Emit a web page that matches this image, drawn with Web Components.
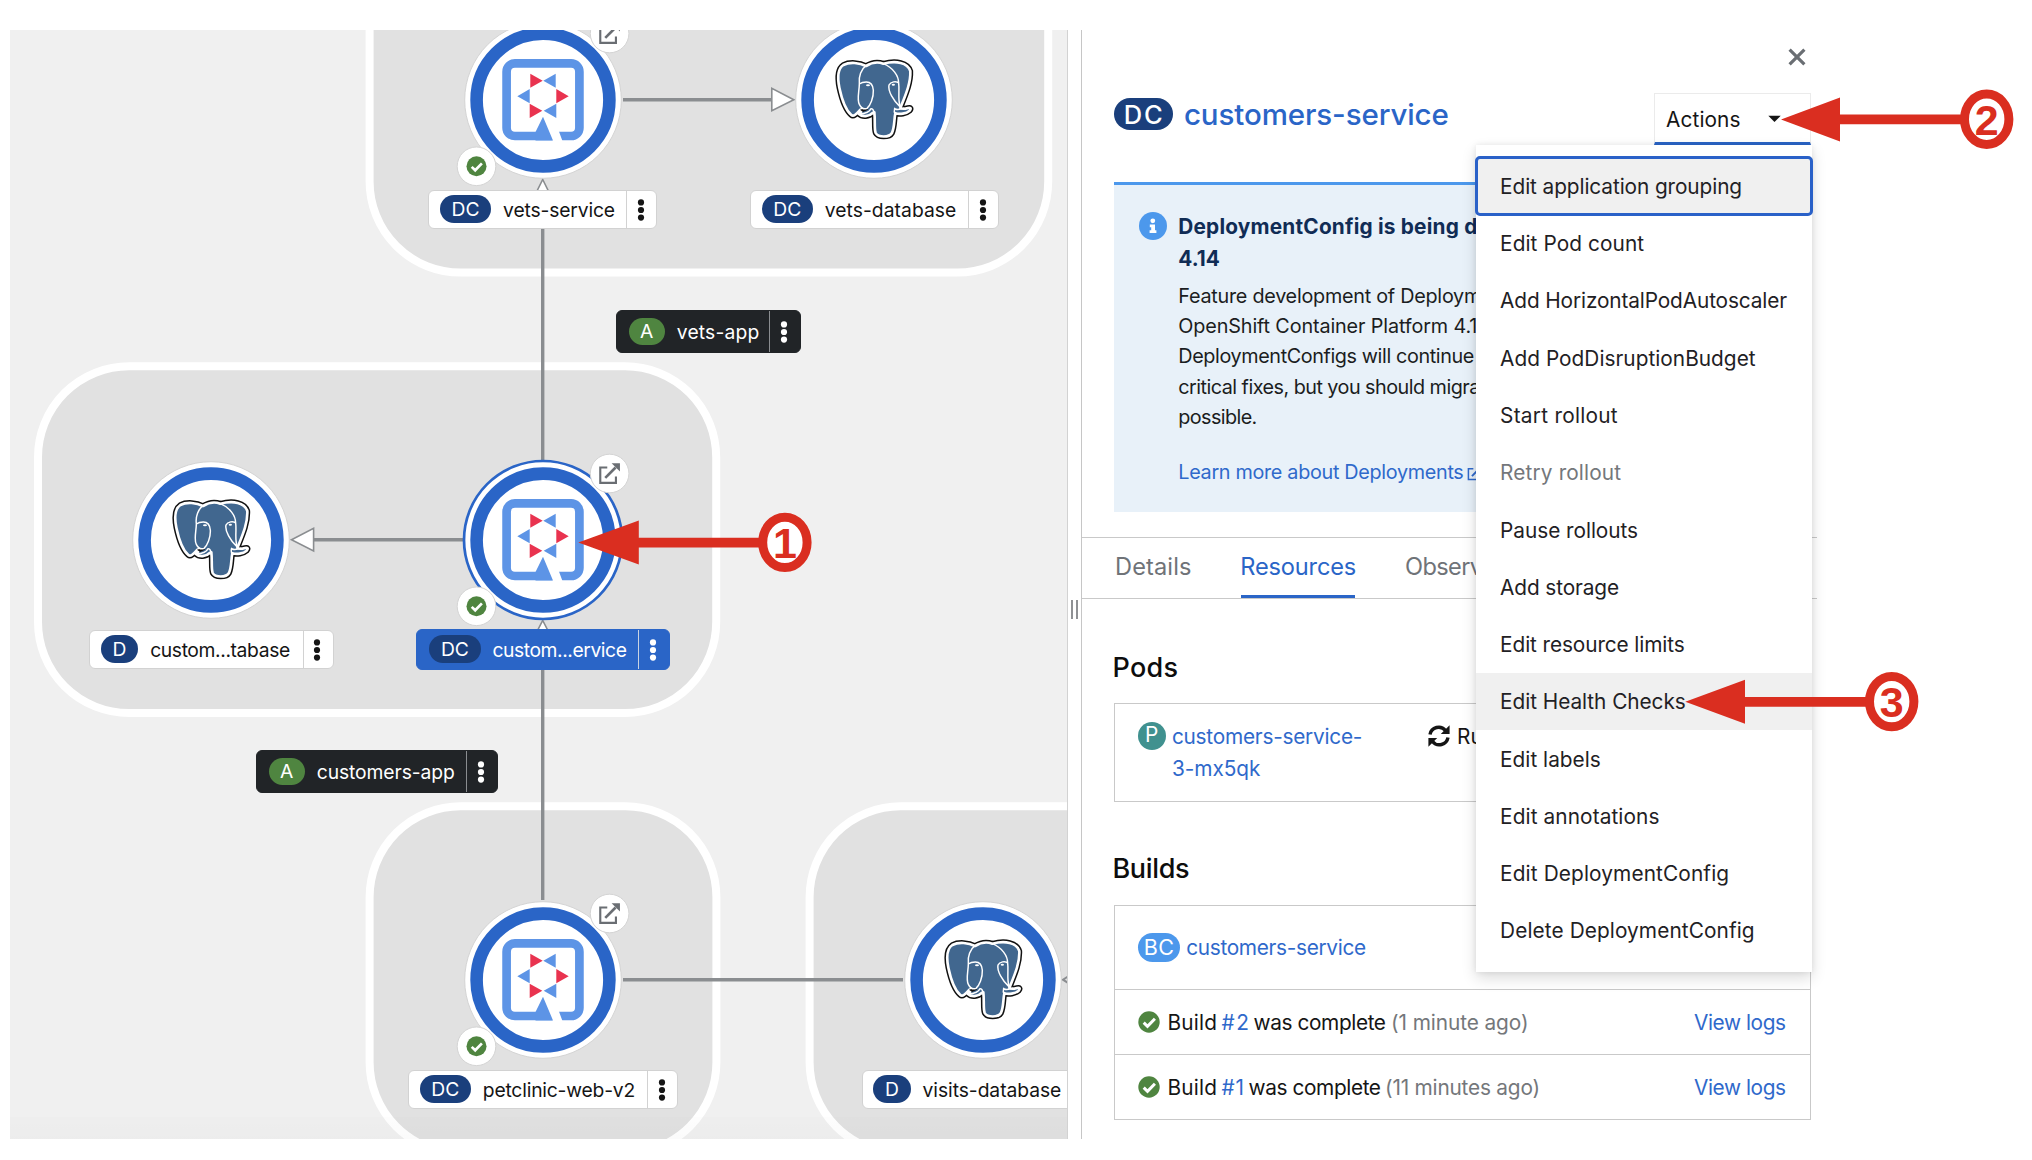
<!DOCTYPE html>
<html lang="en">
<head>
<meta charset="utf-8">
<title>customers-service topology</title>
<style>
html,body{margin:0;background:#fff}
body{width:2032px;height:1160px;overflow:hidden;font-family:Inter,"Liberation Sans",sans-serif;font-size:20.8px;color:#1b1d21}
</style>
</head>
<body>
<topology-app></topology-app>
<script>
const define=(name,html,setup)=>customElements.define(name,class extends HTMLElement{
  constructor(){super();this.attachShadow({mode:'open'});}
  connectedCallback(){
    if(this.ready)return;this.ready=true;
    this.shadowRoot.innerHTML=typeof html==='function'?html(this):html;
    if(setup)setup(this);
  }
});

define('topology-app',`<style>
:host{display:block;position:relative;width:2032px;height:1160px;overflow:hidden}
.cols{display:flex;padding:30px 0 0 10px;height:1109px}
</style>
<div class="cols"><topology-canvas></topology-canvas><split-handle></split-handle><side-panel></side-panel></div>
<callout-arrows></callout-arrows>`);

define('split-handle',`<style>
:host{display:flex;align-items:center;justify-content:center;gap:3px;box-sizing:border-box;width:14px;border-left:1.5px solid #d2d2d2;padding:48px .5px 0 0;background:#fff}
i{width:2px;height:19px;background:#8f9194;margin-top:2px}
</style><i></i><i></i>`);

define('topology-canvas',`<style>
:host{display:block;position:relative;width:1057px;height:1109px;overflow:hidden;background:#f0f0f0}
.graph{position:absolute;left:0;top:0;width:1057px;height:1109px}
.shade{position:absolute;left:0;right:0;bottom:0;height:22px;background:linear-gradient(rgba(0,0,0,.006),rgba(0,0,0,.016))}
</style>
<svg class="graph" viewBox="10 30 1057 1109">
<g fill="#e1e1e1" stroke="#fff" stroke-width="8">
<rect x="369.6" y="-80" width="678.6" height="352.6" rx="91"/>
<rect x="38" y="366.3" width="678.2" height="346.7" rx="91"/>
<rect x="369.6" y="806.3" width="346.8" height="347" rx="91"/>
<rect x="809.6" y="806.3" width="500" height="347" rx="91"/>
</g>
<g stroke="#8a8d90" stroke-width="3.4" fill="none">
<path d="M623 99.7H772M314 539.7H463M623 979.7H903M542.7 460V190M542.7 900V640"/>
<g fill="#fff" stroke-width="1.6">
<path d="M771.8 88.3V110.8L793.8 99.7ZM313.6 528.4V551L291.5 539.7ZM531.6 202H553.8L542.7 179.5ZM531.6 642H553.8L542.7 620.5Z"/>
</g>
<path d="M1069 975.9L1063 979.7L1069 983.5" stroke-width="2"/>
</g>
</svg>
<topo-node icon="quarkus" x="542.7" y="99.5" deco></topo-node>
<topo-node icon="postgres" x="874.3" y="99.5"></topo-node>
<topo-node icon="postgres" x="211.3" y="539.5"></topo-node>
<topo-node icon="quarkus" x="542.7" y="539.5" deco selected></topo-node>
<topo-node icon="quarkus" x="542.7" y="979.5" deco></topo-node>
<topo-node icon="postgres" x="982.7" y="979.5"></topo-node>
<node-label x="428.3" y="190" width="228.8" kind="DC" tw="110">vets-service</node-label>
<node-label x="750" y="190" width="249" kind="DC" tw="129.5">vets-database</node-label>
<node-label x="89.2" y="630" width="244.6" kind="D" tw="138">custom...tabase</node-label>
<node-label class="sel" x="415.8" y="629" width="254.2" kind="DC" tw="132.6">custom...ervice</node-label>
<node-label x="408" y="1070" width="270" kind="DC" tw="150.5">petclinic-web-v2</node-label>
<node-label x="861.6" y="1070" width="250" kind="D" tw="136.7">visits-database</node-label>
<node-label class="app" x="616.2" y="310.4" width="185.2" kind="A" tw="80.5">vets-app</node-label>
<node-label class="app" x="256.2" y="750.4" width="241.4" kind="A" tw="136">customers-app</node-label>
<div class="shade"></div>`);

const quarkus=`<g fill="#5d94e6"><rect x="-36.4" y="-36.6" width="72.8" height="72.6" rx="8.3" fill="none" stroke="#5d94e6" stroke-width="8.7"/>
<path fill="#fff" d="M2 23L10 43H20.2L15.8 31L7 29Z"/>
<path d="M0 16.7L-7.5 32V40.4H10ZM12.7-26.3L.3-19.3L12.7-12.3ZM-25.7-3.7L-13.3-11V3.3ZM13.3 3.7L.7 10.7L13.3 18Z"/>
<path fill="#e9334f" d="M-12.7-26.3L-.3-19.3L-12.7-12.3ZM25.7-3.7L13.3-11V3.3ZM-13.3 3.7L-.7 10.7L-13.3 18Z"/></g>`;
const elephantBody='M499 137C480 127 450 124 431 134C413 146 413 172 419 202C427 240 441 272 455 284C462 291 472 279 482 268L488 266C488 274 482 276 478 281C488 291 508 289 519 278L524 276C527 300 523 325 528 338C535 352 569 352 577 338C585 320 583 300 587 279C600 283 620 280 630 271C636 264 632 261 625 263C615 266 608 267 602 263C615 230 634 190 632 152C624 127 590 120 551 130C535 124 515 127 499 137Z';
const postgres=`<g transform="scale(.3333) translate(-523 -239)" stroke-linejoin="round" stroke-linecap="round">
<path d="${elephantBody}" fill="#111" stroke="#111" stroke-width="17"/>
<path d="${elephantBody}" fill="#41678f" stroke="#fff" stroke-width="8"/>
<path d="M481 268L500 262L505 268L490 275Z" fill="#111"/>
<g fill="none" stroke="#fff" stroke-width="4.4">
<path d="M499 136C485 146 476 168 479 190C479 212 471 238 479 252C484 262 493 268 502 264C512 255 522 232 521 210C520 194 514 185 500 185C490 185 483 188 479 191"/>
<path d="M551 130C580 142 597 166 597 188C600 212 594 236 601 256M597 188C590 181 573 184 568 194C564 212 582 242 600 258M585 264C583 270 585 280 587 284M587 266C595 270 605 265 612 264M478 281C496 280 510 276 513 266C517 264 521 267 523 276"/>
</g><ellipse cx="505" cy="195" rx="6" ry="3" fill="#fff"/><ellipse cx="581" cy="193" rx="5" ry="3" fill="#fff"/></g>`;
const linkGlyph=`<path d="M-7-18H-28V28H19V9" fill="none" stroke-width="6.4" stroke="currentColor"/><path d="M-13 13L18-18" stroke-width="8" stroke="currentColor"/><path d="M31-31H6L31-6Z" fill="currentColor"/>`;

define('topo-node',el=>`<style>
:host{display:block;position:absolute;width:180px;height:180px;left:${el.getAttribute('x')-100}px;top:${el.getAttribute('y')-120}px}
svg{display:block;overflow:visible}
</style>
<svg width="180" height="180" viewBox="-90 -90 180 180">
<circle r="78.3" fill="#fff" stroke="#d4d4d4" stroke-width="1"/>
${el.hasAttribute('selected')?'<circle r="79" fill="#fff" stroke="#2a65c7" stroke-width="2.7"/>':''}
<circle r="66.4" fill="#fff" stroke="#2a65c7" stroke-width="12.6"/>
${el.getAttribute('icon')==='quarkus'?quarkus:postgres}
${el.hasAttribute('deco')?`<g transform="translate(66.6 -66.5)" color="#6a6e73"><circle r="19.3" fill="#fff" stroke="#d4d4d4"/><g transform="scale(.3333)">${linkGlyph}</g></g>
<g transform="translate(-66.5 66.3)"><circle r="19.3" fill="#fff" stroke="#d4d4d4"/><circle r="10" fill="#4f8540"/><path d="M-4.8.6L-1.3 4L5.4-2.9" fill="none" stroke="#fff" stroke-width="2.7"/></g>`:''}
</svg>`);

define('node-label',el=>`<style>
:host{position:absolute;left:${el.getAttribute('x')-10}px;top:${el.getAttribute('y')-30}px;width:${el.getAttribute('width')}px;height:39px;box-sizing:border-box;display:flex;align-items:center;background:#fff;border:1px solid #d2d2d2;border-radius:6px;color:#151515;font-size:19.3px;padding-left:10.6px;--sep:#d2d2d2}
:host(.sel){height:41px;background:#2a65c7;border-color:#2a65c7;color:#fff;padding-left:12.4px;--sep:#c9d3e2}
:host(.app){height:43px;background:#212427;border-color:#212427;color:#fff;padding-left:11.4px;--sep:#8a8d90}
.b{display:flex;align-items:center;justify-content:center;width:${{DC:51.4,D:37.6,A:36.4}[el.getAttribute('kind')]}px;height:27.4px;margin-top:-1px;border-radius:14px;background:#1a3f7c;color:#fff;flex:none}
:host(.app) .b{background:#4f8540}
.t{margin-left:12.8px;flex:none;margin-top:1px}
.k{margin-left:auto;align-self:stretch;border-left:1px solid var(--sep);box-sizing:border-box;padding-right:2px;width:${el.className?31:30}px;display:flex;align-items:center;justify-content:center;flex:none}
</style><span class="b">${el.getAttribute('kind')==='DC'?'<fit-text w="26">DC</fit-text>':el.getAttribute('kind')}</span><fit-text class="t" w="${el.getAttribute('tw')}">${el.textContent}</fit-text>
<span class="k"><svg width="8" height="24" viewBox="0 0 8 24" fill="currentColor"><circle cx="4" cy="4.4" r="3.1"/><circle cx="4" cy="12" r="3.1"/><circle cx="4" cy="19.6" r="3.1"/></svg></span>`);

define('side-panel',`<style>
:host{display:block;box-sizing:border-box;width:736px;height:1109px;border-left:1px solid #c6c6c6;background:#fff}
header,.body{padding-left:31.5px;width:697.5px}
.close{display:flex;justify-content:flex-end;padding:18px 5px 0 0;height:45.3px}
.row{display:flex;justify-content:space-between;height:51.7px}
.title{display:flex;align-items:center;gap:12px;padding-bottom:10px;font-size:29.5px;color:#2a65c7;font-weight:500}
.title b{display:flex;align-items:center;justify-content:center;width:59.4px;height:31.4px;border-radius:16px;background:#1a3f7c;color:#fff;font-size:25.5px;font-weight:500}
info-alert{margin-top:36.7px}
nav{margin-top:25.3px;display:flex;height:60px;border-top:1px solid #c9c9c9;border-bottom:1px solid #c9c9c9;padding-left:34px;gap:50.8px;font-size:23.6px;color:#6f7378;line-height:57.5px}
nav .on{color:#2a65c7;border-bottom:3px solid #2a65c7;height:60px;box-sizing:border-box}
h2{margin:0;font-size:27px;font-weight:500;color:#0d0d0d;line-height:36px}
.pods{margin-top:50.7px}.builds{margin-top:49px}
.card{margin-top:17.5px;border:1px solid #c9c9c9;width:697.5px;box-sizing:border-box}
.builds+.card{margin-top:17.5px}
a{color:#2f69cb}
.pod{display:flex;height:97px;box-sizing:border-box;padding:17px 0 0 23px;line-height:32px}
.c{display:flex;align-items:center;justify-content:center;height:28.4px;border-radius:15px;color:#fff;flex:none;line-height:1;margin-top:.5px}
.pod a{display:flex;flex-direction:column;margin-left:7px;width:254px}
.pod fit-text{line-height:32.3px}
.st{display:flex;color:#151515}
.bc{display:flex;align-items:center;height:83.4px;padding-left:23px}
.br{display:flex;align-items:center;height:64px;border-top:1px solid #c9c9c9;padding:0 25px 0 23px;color:#151515}
.ago{color:#74777b}.log{margin-left:auto}
</style>
<header><div class="close"><svg width="18" height="18" viewBox="0 0 18 18"><path d="M1.6 1.6L16.4 16.4M16.4 1.6L1.6 16.4" stroke="#6a6e73" stroke-width="3.2"/></svg></div>
<div class="row"><div class="title"><b><fit-text w="37">DC</fit-text></b><fit-text w="263">customers-service</fit-text></div><actions-menu></actions-menu></div></header>
<info-alert></info-alert>
<nav><fit-text w="74.5">Details</fit-text><fit-text class="on" w="114">Resources</fit-text><fit-text w="76">Observ</fit-text></nav>
<div class="body">
<h2 class="pods"><fit-text w="63.5">Pods</fit-text></h2>
<div class="card"><div class="pod"><span class="c" style="width:28.4px;background:#40918f">P</span><a><fit-text w="188.5">customers-service-</fit-text><fit-text w="86.5">3-mx5qk</fit-text></a>
<span class="st"><svg width="24" height="24" viewBox="0 0 24 24" style="margin:3px 7px 0 0"><g fill="none" stroke="#151515" stroke-width="3.4"><path d="M3 10.5A8.8 8.8 0 0 1 18.5 6.5M21 13.5A8.8 8.8 0 0 1 5.5 17.5"/></g><path fill="#151515" d="M22.6 1.2V10H13.8ZM1.4 22.8V14H10.2Z"/></svg><fit-text w="24">Ru</fit-text></span></div></div>
<h2 class="builds"><fit-text w="75">Builds</fit-text></h2>
<div class="card"><div class="bc"><span class="c" style="width:42.7px;background:#4c98ec;font-size:21.5px"><fit-text w="28">BC</fit-text></span><a style="margin-left:7px"><fit-text w="178">customers-service</fit-text></a></div>
<div class="br"><ok-icon></ok-icon><fit-text w="47.5">Build</fit-text><a style="margin-left:6.5px"><fit-text w="25.5">#2</fit-text></a><fit-text style="margin-left:6.5px" w="130.5">was complete</fit-text><fit-text class="ago" style="margin-left:7px" w="135.5">(1 minute ago)</fit-text><a class="log"><fit-text w="90">View logs</fit-text></a></div>
<div class="br"><ok-icon></ok-icon><fit-text w="47.5">Build</fit-text><a style="margin-left:6.5px"><fit-text w="20.5">#1</fit-text></a><fit-text style="margin-left:6.5px" w="130.5">was complete</fit-text><fit-text class="ago" style="margin-left:6px" w="153">(11 minutes ago)</fit-text><a class="log"><fit-text w="90">View logs</fit-text></a></div>
</div></div>`);

define('ok-icon',`<style>:host{display:block;width:22px;height:22px;margin-right:9px;flex:none}svg{display:block}</style>
<svg width="22" height="22" viewBox="-11 -11 22 22"><circle r="10.7" fill="#4f8540"/><path d="M-5.3.6L-1.5 4.3L5.9-3.2" fill="none" stroke="#fff" stroke-width="3"/></svg>`);

define('info-alert',`<style>
:host{display:flex;box-sizing:border-box;margin-left:31.5px;width:697.5px;height:330px;border-top:3.3px solid #4c98ec;background:#e8f1f9;padding:26.3px 0 0 25px;overflow:hidden}
.i{flex:none;margin:.6px 12.8px 0 0}
.col{display:flex;flex-direction:column}
.h{font-weight:700;font-size:20.8px;color:#102c55;line-height:32.5px}
.p{line-height:30.2px;font-size:19.8px}
.p1{margin-top:5px}
.lnk{display:flex;align-items:center;margin-top:25px;color:#2f69cb;height:30px}
</style>
<svg class="i" width="28" height="28" viewBox="-14 -14 28 28"><circle r="14" fill="#4c98ec"/><circle cx="-.2" cy="-5.2" r="2.4" fill="#fff"/><path fill="#fff" d="M-3.2-1.6H2V4.2H3.4V7H-3.4V4.2H-1.8V1.2H-3.2Z"/></svg>
<div class="col">
<fit-text class="h" w="297">DeploymentConfig is being d</fit-text><fit-text class="h" w="39.5">4.14</fit-text>
<fit-text class="p p1" w="301">Feature development of Deploym</fit-text><fit-text class="p" w="297">OpenShift Container Platform 4.1</fit-text><fit-text class="p" w="294">DeploymentConfigs will continue</fit-text><fit-text class="p" w="300">critical fixes, but you should migra</fit-text><fit-text class="p" w="77">possible.</fit-text>
<div class="lnk"><fit-text class="p" w="283.5">Learn more about Deployments</fit-text><svg width="16" height="16" viewBox="-34 -34 68 68" style="margin:2px 0 0 4px">${linkGlyph}</svg></div>
</div>`);

const items=[['Edit application grouping',240],['Edit Pod count',142],['Add HorizontalPodAutoscaler',285],['Add PodDisruptionBudget',253.5],['Start rollout',115.5],['Retry rollout',119],['Pause rollouts',136],['Add storage',117],['Edit resource limits',182.7],['Edit Health Checks',183.7],['Edit labels',98.7],['Edit annotations',157.3],['Edit DeploymentConfig',227],['Delete DeploymentConfig',252.5]];
define('actions-menu',`<style>
:host{display:block;position:relative;width:157px;height:51.7px}
.btn{box-sizing:border-box;display:flex;align-items:center;justify-content:space-between;height:51.7px;border:1px solid #ebebeb;border-bottom:3px solid #2a65c7;padding:2.6px 29px 0 12px;color:#151515}
.menu{position:absolute;z-index:2;right:-.5px;top:51.7px;width:336px;height:827px;box-sizing:border-box;padding:12.5px 0;background:#fff;box-shadow:0 6px 14px rgba(3,3,3,.14),0 0 6px rgba(3,3,3,.08)}
menu-item{color:#1f2124}
.off{color:#74777b}
.hov{background:#f0f0f0}
.foc{background:#f0f0f0;outline:3px solid #2a61c8;outline-offset:-2px;border-radius:4px}
</style>
<div class="btn"><fit-text w="72.5">Actions</fit-text><svg width="13" height="8" viewBox="0 0 13 8"><path d="M.3.8H12.7L6.5 7Z" fill="#151515"/></svg></div>
<div class="menu">${items.map(([t,w],i)=>`<menu-item class="${i===0?'foc':i===5?'off':i===9?'hov':''}"><fit-text w="${w}">${t}</fit-text></menu-item>`).join('')}</div>`);

define('menu-item',`<style>:host{display:flex;align-items:center;height:57.28px;box-sizing:border-box;padding:.6px 0 0 25.6px}</style><slot></slot>`);

const arrow=(tip,base,y,cx,n)=>`<path d="M${tip} ${y}L${base} ${y-22}V${y-4.9}H${cx-20}V${y+4.9}H${base}V${y+22}Z"/><ellipse cx="${cx}" cy="${y-.2}" rx="22.2" ry="25.2" fill="#fff" stroke="#da2e20" stroke-width="9"/><text x="${cx}" y="${y+15.2}">${n}</text>`;
define('callout-arrows',`<style>
:host{position:absolute;inset:0;z-index:5;pointer-events:none}
svg{display:block}
text{font:700 43px "Liberation Sans",Arial,sans-serif;text-anchor:middle}
</style><svg width="2032" height="1160" viewBox="0 0 2032 1160" fill="#da2e20">
${arrow(578.3,638.8,542.6,784.9,1)}${arrow(1781,1840,119.4,1986.7,2)}${arrow(1685.3,1745,701.8,1891.7,3)}</svg>`);

/* Sets a run of text to a given width by tracking its letters. */
define('fit-text',`<style>:host{display:block;flex:none;white-space:nowrap}span{display:inline-block;margin-left:-1px}</style><span><slot></slot></span>`,el=>{
  const s=el.shadowRoot.querySelector('span'),w=+el.getAttribute('w');
  const n=el.textContent.length,nat=s.getBoundingClientRect().width;
  el.style.width=w+'px';
  s.style.letterSpacing=((w+2-nat)/(n-1)).toFixed(3)+'px';
});
</script>
</body>
</html>
